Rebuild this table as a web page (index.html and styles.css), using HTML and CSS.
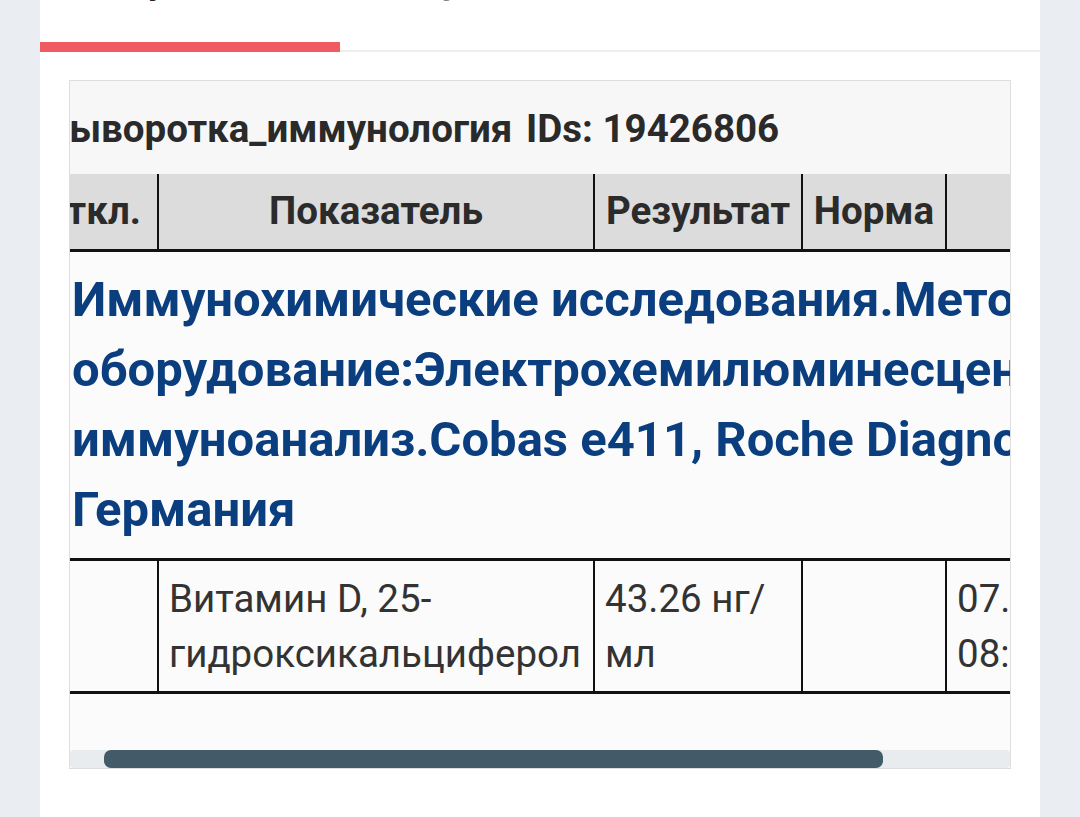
FILE: index.html
```html
<!DOCTYPE html>
<html lang="ru">
<head>
<meta charset="utf-8">
<title>Результаты</title>
<link rel="stylesheet" href="styles.css">
</head>
<body>
<div class="card">
  <div class="tabs">
    <div class="tab active">Результаты</div>
    <div class="tab">Лучевая</div>
  </div>
  <div class="panel">
    <div class="viewport">
      <div class="content">
        <div class="title">Сыворотка_иммунология <span class="ids">IDs: 19426806</span></div>
        <table class="results">
          <colgroup>
            <col class="c1"><col class="c2"><col class="c3"><col class="c4"><col class="c5">
          </colgroup>
          <thead>
            <tr>
              <th>Откл.</th>
              <th>Показатель</th>
              <th>Результат</th>
              <th>Норма</th>
              <th>Дата</th>
            </tr>
          </thead>
          <tbody>
            <tr>
              <td class="group" colspan="5">Иммунохимические исследования.Метод и оборудование:Электрохемилюминесцентный иммуноанализ.Cobas e411, Roche Diagnostics, Германия</td>
            </tr>
            <tr class="row">
              <td></td>
              <td>Витамин D, 25-гидроксикальциферол</td>
              <td>43.26 нг/мл</td>
              <td></td>
              <td>07.06.2023 08:15</td>
            </tr>
          </tbody>
        </table>
      </div>
    </div>
    <div class="track"><div class="thumb"></div></div>
  </div>
</div>
</body>
</html>
```
FILE: styles.css
```css
html, body {
  margin: 0;
  padding: 0;
  background: #eaedf1;
  font-family: Roboto, "Noto Sans", sans-serif;
}

.card {
  margin: 0 40px;
  background: #ffffff;
  min-height: 100vh;
  overflow: hidden;
}

.tabs {
  display: flex;
  align-items: flex-start;
  margin-top: -44px;
  border-bottom: 2px solid #eeeeee;
}

.tab {
  width: 300px;
  text-align: center;
  font-weight: 700;
  font-size: 38px;
  line-height: 48px;
  padding-bottom: 46px;
  color: #8a8a8a;
}

.tab.active {
  color: #222222;
  padding-bottom: 38px;
  border-bottom: 10px solid #f05a61;
  margin-bottom: -2px;
}

.panel {
  margin: 28px 29px 0;
  border: 1px solid #dddddd;
  background: #fbfbfb;
}

.viewport {
  overflow: hidden;
}

.content {
  width: 1134px;
  margin-left: -40px;
}

.title {
  background: #f7f7f7;
  padding: 26px 0 24px 14px;
  font-weight: 700;
  font-size: 38.5px;
  line-height: 43px;
  color: #2a2a2a;
  white-space: nowrap;
}

.ids {
  margin-left: 4px;
}

.results {
  width: 1134px;
  border-collapse: collapse;
  table-layout: fixed;
  margin-bottom: 56px;
}

.c1 { width: 127px; }
.c2 { width: 436px; }
.c3 { width: 208px; }
.c4 { width: 144px; }
.c5 { width: 219px; }

.results th {
  background: #dcdcdc;
  font-weight: 700;
  font-size: 38.5px;
  line-height: 48px;
  color: #2b2b2b;
  padding: 13px 6px 14px;
  border-left: 2px solid #111111;
  border-right: 2px solid #111111;
  border-bottom: 3px solid #111111;
  text-align: center;
  white-space: nowrap;
  overflow: hidden;
}

.results th:first-child {
  padding-right: 14px;
}

.results td {
  font-size: 38.5px;
  line-height: 55px;
  color: #333333;
  padding: 10px 8px 10px 10px;
  border-left: 2px solid #111111;
  border-right: 2px solid #111111;
  border-bottom: 3px solid #111111;
  vertical-align: top;
  text-align: left;
}

.results td.group {
  font-weight: 700;
  font-size: 49px;
  line-height: 70px;
  color: #0a3e7f;
  padding: 13px 8px 13px 41px;
  border-left: none;
  border-right: none;
}

.track {
  height: 18px;
  background: #e9ecef;
  border-radius: 4px;
}

.thumb {
  margin-left: 34px;
  width: 779px;
  height: 18px;
  background: #435a68;
  border-radius: 7px;
}
```
